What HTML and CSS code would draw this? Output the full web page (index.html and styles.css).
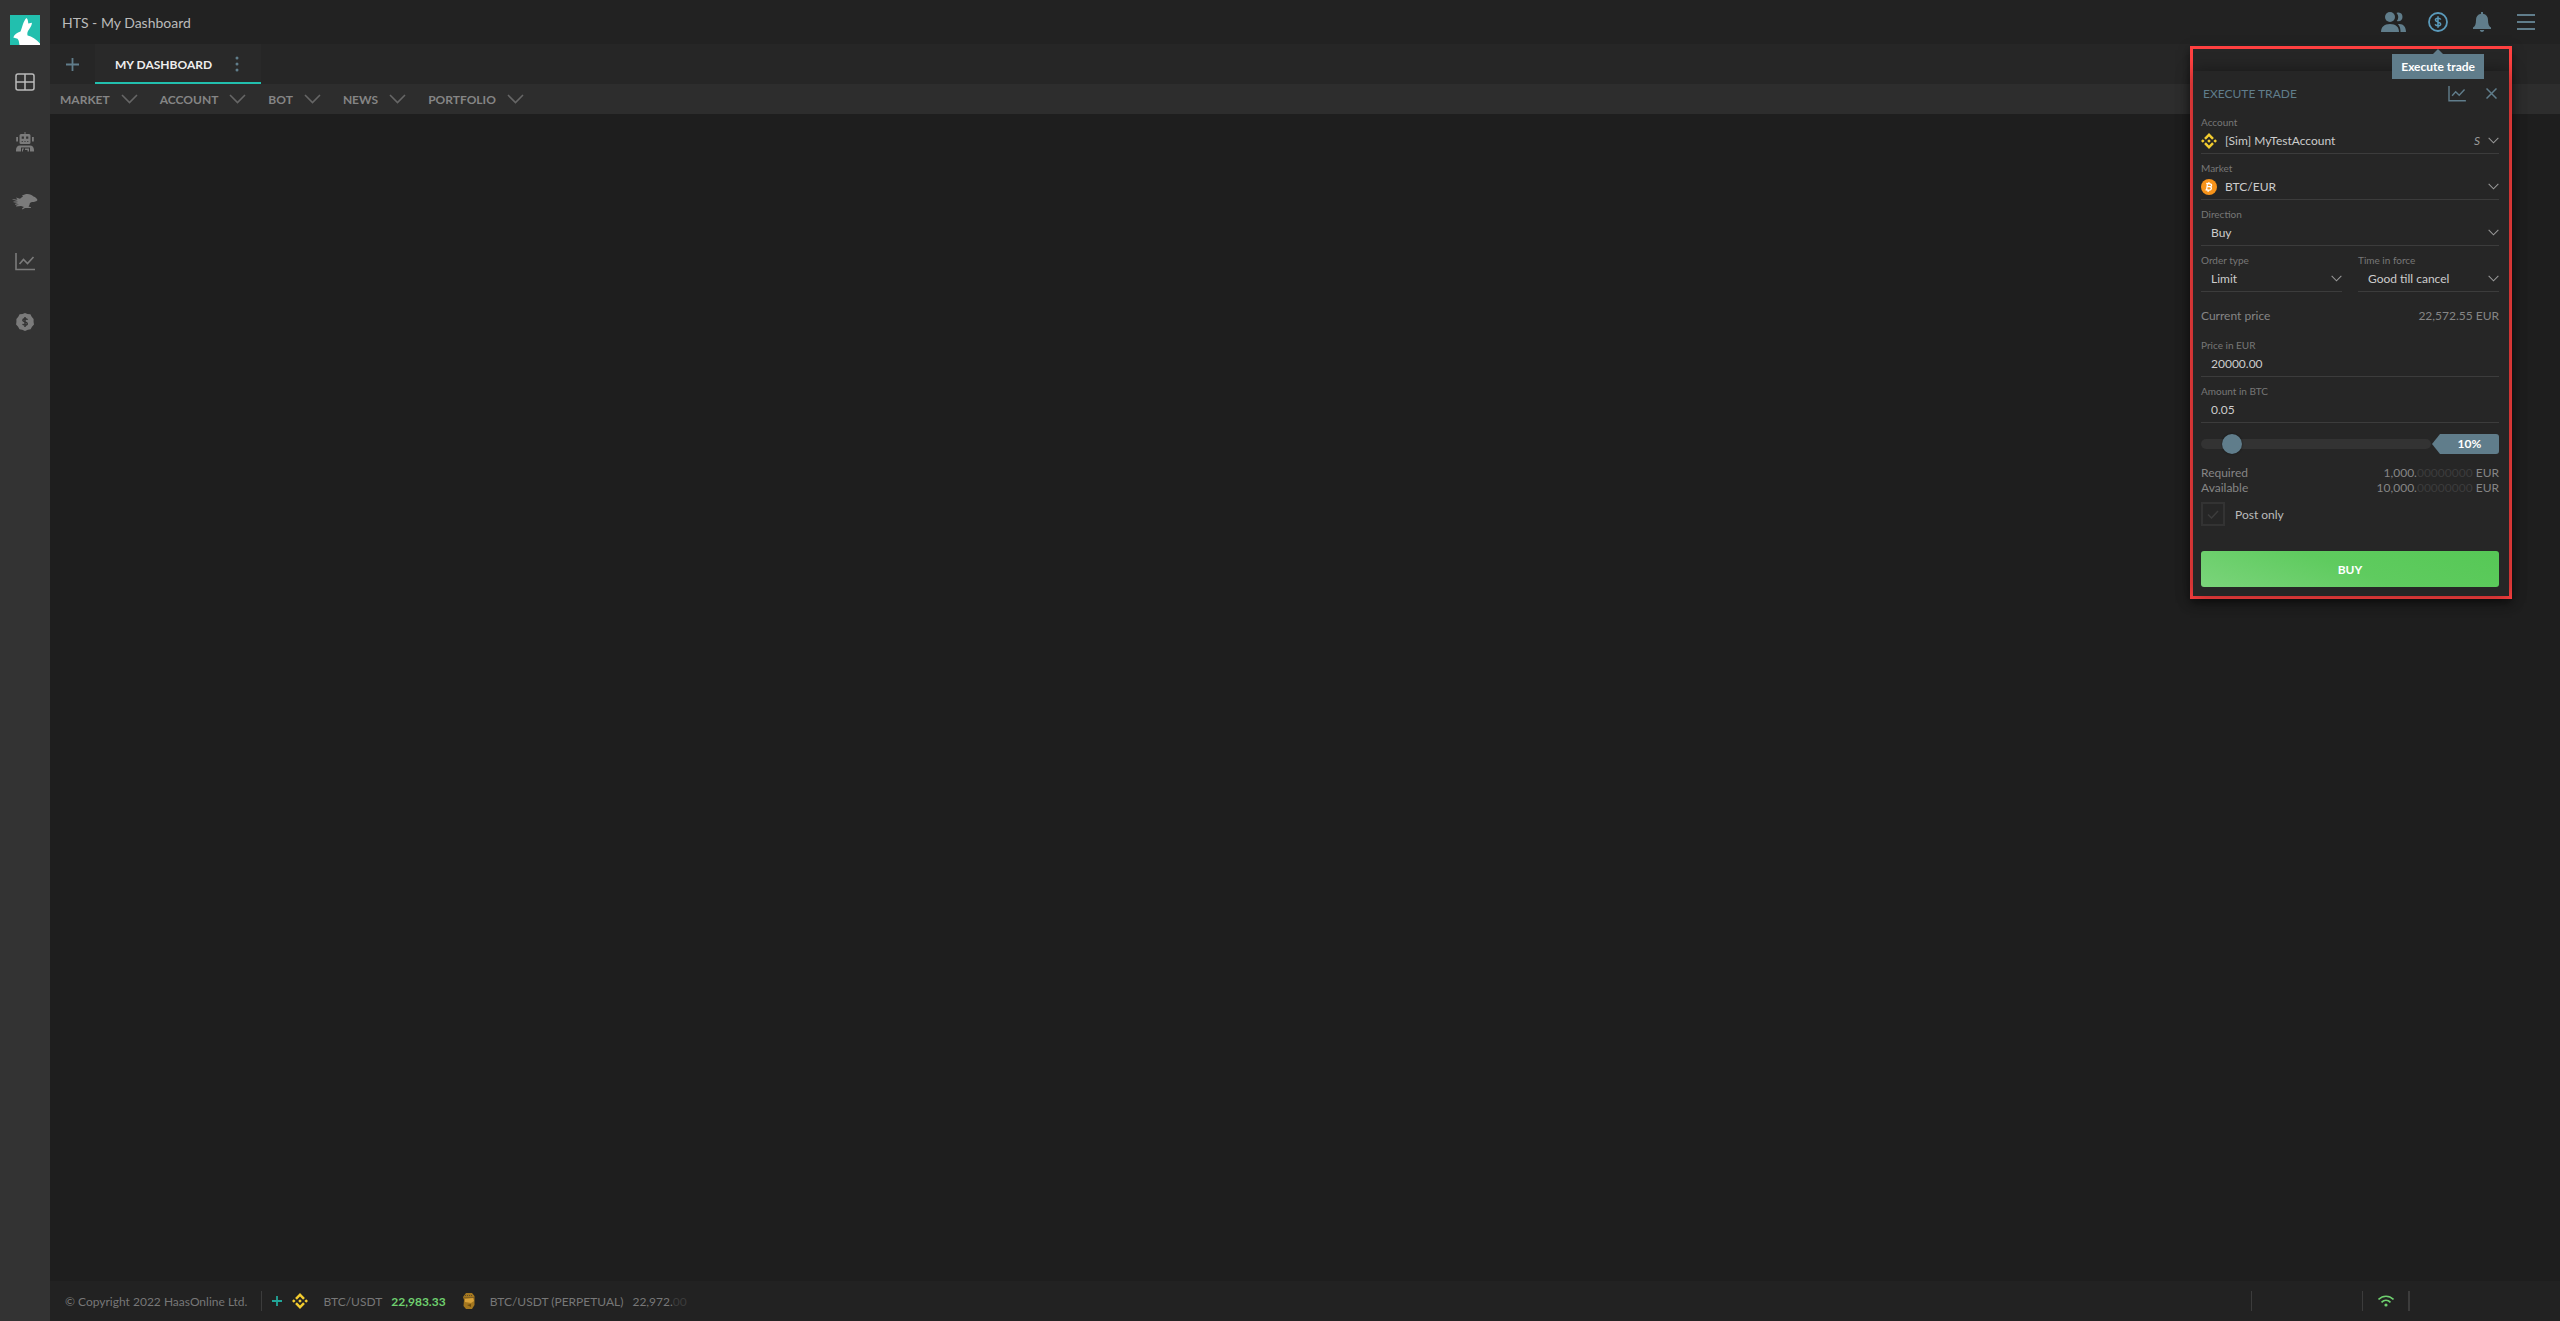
FILE: index.html
```html
<!DOCTYPE html>
<html lang="en">
<head>
    <meta charset="UTF-8">
    <title>HTS - My Dashboard</title>
    <meta name="viewport" content="width=device-width, initial-scale=1.0">
    <link rel="stylesheet" href="styles.css">
</head>
<body>
    <!-- shared icons -->
    <svg class="defs" width="0" height="0">
        <symbol id="chevron" viewBox="0 0 17 10"><path d="M1 1l7.500 7.500L16 1" fill="none" stroke="currentColor" stroke-width="1.600"/></symbol>
        <symbol id="chart" viewBox="0 0 20 18"><path d="M1 0v16.500H20" fill="none" stroke="currentColor" stroke-width="1.600"/><path d="M4.500 11L8.500 6.500l4 4L18.500 4" fill="none" stroke="currentColor" stroke-width="1.600"/></symbol>
        <symbol id="binance" viewBox="0 0 16 16"><path fill="#f3cc2f" d="M8 0l4.900 4.900-1.800 1.800L8 3.600 4.900 6.700 3.100 4.900zM1.800 6.200L3.600 8 1.800 9.800 0 8zM14.200 6.200L16 8l-1.800 1.800L12.400 8zM8 6.200L9.800 8 8 9.800 6.200 8zM4.900 9.300L8 12.400l3.100-3.100 1.800 1.800L8 16l-4.900-4.900z"/></symbol>
    </svg>

    <aside class="sidebar">
        <a class="logo" href="#" aria-label="Home">
            <svg width="30" height="30" viewBox="0 0 30 30"><rect width="30" height="30" fill="#22bfae"/><path fill="#fff" d="M16.300 3c1.500.8 1.700 3 2 5.500L22 7.800c-.2 3-2.200 5.700-4 8.200-.8 1.600-.8 3-.4 4.500 4.400 1.200 8.400 3.300 12.400 8V30H9.500c-.6-2.200-.2-4-2-6.200L3.300 22.500C4.500 19.500 7 17.500 10.500 16.600 12.500 12 12.900 7 16.300 3z"/></svg>
        </a>
        <nav class="side-nav">
            <a class="active" href="#" aria-label="Dashboards"><svg width="20" height="18" viewBox="0 0 20 18" fill="none" stroke="currentColor" stroke-width="1.500"><rect x="1" y="1" width="18" height="16" rx="2"/><path d="M10 1v16M1 9h18"/></svg></a>
            <a href="#" aria-label="Bots"><svg width="20" height="20" viewBox="0 0 20 20" fill="currentColor"><path fill-rule="evenodd" d="M9.500 0h1v2H14a1.500 1.500 0 0 1 1.500 1.500v7A1.500 1.500 0 0 1 14 12H6a1.500 1.500 0 0 1-1.500-1.500v-7A1.500 1.500 0 0 1 6 2h3.500zM6.700 4.500v2.200h2.200V4.500zM11.100 4.500v2.200h2.200V4.500zM6.700 9v1h1V9zM9.500 9v1h1V9zM12.300 9v1h1V9zM1.200 5h1.800v4.500H1.200zM17 5h1.800v4.500H17zM5 13.500h10c2.500 0 4 2 4 4.500v1.500H15V15.500H6v4H1V18c0-2.500 1.500-4.500 4-4.500zM7 16.500h2v1H8v2H7zM10 16.500h4v3h-1.500v-1.500H10z"/></svg></a>
            <a href="#" aria-label="Labs"><svg width="26" height="18" viewBox="0 0 26 18" fill="currentColor"><path d="M11 3.500l-1-1C14 0 19 .5 21.500 3.500c2 .5 3.500 2 4 3.500-.8 1.500-3 2-5.500 2-2 .3-2.500 1.500-2.500 3l-1 1.500 2.500.7V15h-6l-2.500 1.500-.5-1 2-1.500L9 13l-5 .5.3-1L7 11.500l-4 .2.300-1L6 10 1.500 9.300V8.500L6 8.300.5 6.500V6l5 .7L4 4.500l4 1.300c1-1.200 2-1.800 3-2.300z"/></svg></a>
            <a href="#" aria-label="Charts"><svg width="20" height="18"><use href="#chart"/></svg></a>
            <a href="#" aria-label="Trading"><svg width="18" height="18" viewBox="0 0 18 18"><path fill="currentColor" d="M9 0l2.500 1 2.900.2 1.300 2.600L17.600 6v3L18 11.500l-2 2.200-1.400 2.500-2.700.6L9 18l-2.800-1.200-2.700-.6-1.400-2.500-2-2.200L.4 9V6l1.900-2.200 1.300-2.600L6.500 1z"/><path d="M11.500 6.800C11 5.500 7 5.200 6.800 7.200c0 2 4.500 1.400 4.500 3.500 0 2-4.200 1.700-4.600.2M9 4v10" fill="none" stroke="#333" stroke-width="1.500"/></svg></a>
        </nav>
    </aside>

    <div class="page">
        <header class="topbar">
            <span class="page-title">HTS - My Dashboard</span>
            <div class="top-icons">
                <button aria-label="Community"><svg width="26" height="20" viewBox="0 0 26 20" fill="currentColor"><circle cx="9" cy="5" r="5"/><path d="M0 20c0-5 3-8 9-8s9 3 9 8zM15.500 1c4-1.500 6 1.200 6 4s-2.500 5.200-5.700 4c2-2.500 1.900-5.500-.3-8zM17 12.200c5-.8 8 2.500 8 7.800h-5.500c0-3-.5-5.600-2.500-7.800z"/></svg></button>
                <button class="current" aria-label="Execute trade"><svg width="20" height="20" viewBox="0 0 20 20" fill="none" stroke="currentColor"><circle cx="10" cy="10" r="9" stroke-width="1.800"/><path d="M12.700 7.600C12.200 5.800 7.500 5.500 7.400 8c0 2.400 5.300 1.500 5.300 4.100 0 2.400-5 2.100-5.500.2M10 4.300v11.400" stroke-width="1.500"/></svg></button>
                <button aria-label="Notifications"><svg width="20" height="20" viewBox="0 0 20 20" fill="currentColor"><path d="M9 0h2v1.800c3.500.6 5 3 5 6.200 0 4 1 6.500 3 7.500V17H1v-1.500c2-1 3-3.500 3-7.500 0-3.200 1.500-5.600 5-6.200zM7.800 18h4.400c-.3 2.600-4.100 2.600-4.400 0z"/></svg></button>
                <button aria-label="Menu"><svg width="18" height="16" viewBox="0 0 18 16" fill="none" stroke="currentColor" stroke-width="1.800"><path d="M0 1h18M0 8h18M0 15h18"/></svg></button>
            </div>
        </header>

        <div class="tabs">
            <button class="add-tab" aria-label="Add dashboard"><svg width="13" height="13" viewBox="0 0 13 13" stroke="currentColor" stroke-width="1.800"><path d="M6.500 0v13M0 6.500h13"/></svg></button>
            <div class="tab">
                <a href="#">MY DASHBOARD</a>
                <button aria-label="Dashboard options"><svg width="4" height="16" viewBox="0 0 4 16" fill="currentColor"><circle cx="2" cy="2" r="1.500"/><circle cx="2" cy="8" r="1.500"/><circle cx="2" cy="14" r="1.500"/></svg></button>
            </div>
        </div>

        <nav class="widgets">
            <button>MARKET <svg width="17" height="10"><use href="#chevron"/></svg></button>
            <button>ACCOUNT <svg width="17" height="10"><use href="#chevron"/></svg></button>
            <button>BOT <svg width="17" height="10"><use href="#chevron"/></svg></button>
            <button>NEWS <svg width="17" height="10"><use href="#chevron"/></svg></button>
            <button>PORTFOLIO <svg width="17" height="10"><use href="#chevron"/></svg></button>
        </nav>

        <main class="board"></main>

        <footer class="footer">
            <span class="copyright">© Copyright 2022 HaasOnline Ltd.</span>
            <div class="ticker">
                <button aria-label="Add ticker"><svg width="10" height="10" viewBox="0 0 10 10" stroke="currentColor" stroke-width="1.800"><path d="M5 0v10M0 5h10"/></svg></button>
                <svg class="coin" width="16" height="16"><use href="#binance"/></svg>
                <span class="pair">BTC/USDT</span>
                <span class="up">22,983.33</span>
                <svg class="coin" width="12" height="16" viewBox="0 0 12 16"><path fill="#a4771f" d="M3 0h6l2.500 3v9L9 16H3L.5 13 1 7 0 4z"/><path fill="#d9a239" d="M2 6l8-1 1 3-3 2-6-1z"/><path d="M2 2.500h8M1.500 4.500h9" stroke="#604d28" stroke-dasharray="1 1"/><path d="M4 12l4-1v3z" fill="#6d4b0d"/></svg>
                <span class="pair">BTC/USDT (PERPETUAL)</span>
                <span>22,972.<span class="dim">00</span></span>
            </div>
            <div class="status">
                <span class="slot"></span>
                <span class="wifi"><svg width="16" height="12" viewBox="0 0 16 12" fill="none" stroke="currentColor" stroke-width="1.600"><path d="M.5 4.500c4.500-4.400 10.500-4.400 15 0M3.500 7.300c2.700-2.600 6.300-2.600 9 0"/><circle cx="8" cy="10" r="1.600" fill="currentColor" stroke="none"/></svg></span>
            </div>
        </footer>
    </div>

    <div class="frame">
        <form class="trade">
            <div class="trade-head">
                <h2>EXECUTE TRADE</h2>
                <button type="button" aria-label="Open chart"><svg width="18" height="16"><use href="#chart"/></svg></button>
                <button type="button" aria-label="Close"><svg width="11" height="11" viewBox="0 0 11 11" stroke="currentColor" stroke-width="1.500"><path d="M.5.5l10 10M10.500.5l-10 10"/></svg></button>
            </div>

            <div class="field">
                <label for="account">Account</label>
                <div class="control">
                    <svg width="16" height="16"><use href="#binance"/></svg>
                    <select class="with-icon" id="account"><option>[Sim] MyTestAccount</option></select>
                    <em>S</em>
                    <svg class="arrow" width="11" height="7"><use href="#chevron"/></svg>
                </div>
            </div>
            <div class="field">
                <label for="market">Market</label>
                <div class="control">
                    <svg width="16" height="16" viewBox="0 0 16 16"><circle cx="8" cy="8" r="8" fill="#f7931a"/><path d="M6.600 4.200L5.500 11.500M5.200 4.500l3.800.4c2.400.4 1.800 3-.4 2.800l-2.200-.2 2.300.2c2.600.4 2 3.700-.7 3.500l-3.500-.3M8 3.200l-.2 1.500M7.200 11.300L7 12.800" fill="none" stroke="#fff" stroke-width="1.300"/></svg>
                    <select class="with-icon" id="market"><option>BTC/EUR</option></select>
                    <svg class="arrow" width="11" height="7"><use href="#chevron"/></svg>
                </div>
            </div>
            <div class="field">
                <label for="direction">Direction</label>
                <div class="control">
                    <select id="direction"><option>Buy</option><option>Sell</option></select>
                    <svg class="arrow" width="11" height="7"><use href="#chevron"/></svg>
                </div>
            </div>
            <div class="field-row">
                <div class="field">
                    <label for="order-type">Order type</label>
                    <div class="control">
                        <select id="order-type"><option>Limit</option><option>Market</option></select>
                        <svg class="arrow" width="11" height="7"><use href="#chevron"/></svg>
                    </div>
                </div>
                <div class="field">
                    <label for="tif">Time in force</label>
                    <div class="control">
                        <select id="tif"><option>Good till cancel</option></select>
                        <svg class="arrow" width="11" height="7"><use href="#chevron"/></svg>
                    </div>
                </div>
            </div>

            <div class="line current-price"><span>Current price</span><span>22,572.55 EUR</span></div>

            <div class="field">
                <label for="price">Price in EUR</label>
                <div class="control"><input type="text" id="price" value="20000.00"></div>
            </div>
            <div class="field">
                <label for="amount">Amount in BTC</label>
                <div class="control"><input type="text" id="amount" value="0.05"></div>
            </div>

            <div class="slider">
                <input type="range" id="percent" min="0" max="100" value="10" aria-label="Percentage of balance">
                <output for="percent">10%</output>
            </div>

            <div class="line"><span>Required</span><span>1,000.<span class="dim">00000000</span> EUR</span></div>
            <div class="line"><span>Available</span><span>10,000.<span class="dim">00000000</span> EUR</span></div>

            <label class="check">
                <input type="checkbox">
                <svg width="12" height="9" viewBox="0 0 12 9" fill="none" stroke="currentColor" stroke-width="1.500"><path d="M1 4.500L4.500 8 11 1"/></svg>
                Post only
            </label>

            <button class="buy" type="button">BUY</button>
        </form>
    </div>
    <div class="tooltip">Execute trade</div>
</body>
</html>
```

FILE: styles.css
```css
* {
    box-sizing: border-box;
}
body {
    margin: 0;
    min-height: 100vh;
    display: flex;
    position: relative;
    background: #1e1e1e;
    color: #858585;
    font-family: Lato, "Liberation Sans", sans-serif;
    font-size: 12px;
    line-height: 15px;
}
svg {
    display: block;
    flex: none;
}
a {
    color: inherit;
    text-decoration: none;
}
button, input, select {
    margin: 0;
    padding: 0;
    border: none;
    background: none;
    color: inherit;
    font: inherit;
}
.defs {
    position: absolute;
}
.dim {
    color: #3c3c3c;
}

/* sidebar */
.sidebar {
    width: 50px;
    flex: none;
    background: #333;
}
.logo {
    display: block;
    padding: 15px 10px 7px;
}
.side-nav a {
    display: flex;
    height: 60px;
    align-items: center;
    justify-content: center;
    color: #7b7b7b;
}
.side-nav a.active {
    color: #bbb;
}

.page {
    flex: 1;
    min-width: 0;
    display: flex;
    flex-direction: column;
}

/* top bar */
.topbar {
    display: flex;
    height: 44px;
    align-items: center;
    justify-content: space-between;
    padding: 0 12px;
    background: #222;
}
.page-title {
    padding-top: 2px;
    font-size: 14px;
    line-height: 18px;
    color: #bbb;
}
.top-icons {
    display: flex;
    color: #607d8b;
}
.top-icons button {
    display: flex;
    width: 44px;
    height: 44px;
    align-items: center;
    justify-content: center;
}
.top-icons .current {
    color: #5a9abb;
}

/* dashboard tabs */
.tabs {
    display: flex;
    height: 40px;
    background: #262626;
    color: #607d8b;
}
.add-tab {
    display: flex;
    width: 45px;
    align-items: center;
    justify-content: center;
}
.tab {
    display: flex;
    align-items: center;
    gap: 23px;
    padding: 2px 22px 0 20px;
    background: #292929;
    border-bottom: 2px solid #22bfae;
}
.tab a {
    color: #eee;
    font-weight: bold;
}

.widgets {
    display: flex;
    height: 30px;
    gap: 22px;
    padding: 0 10px;
    background: #2d2d2d;
}
.widgets button {
    display: flex;
    align-items: center;
    gap: 11px;
    font-weight: bold;
}
.widgets svg {
    color: #666;
}

.board {
    flex: 1;
}

/* footer */
.footer {
    display: flex;
    height: 40px;
    align-items: center;
    padding: 0 150px 0 15px;
    background: #222;
    color: #777;
}
.copyright {
    padding-right: 14px;
}
.ticker {
    display: flex;
    flex: 1;
    height: 20px;
    align-items: center;
    padding-left: 10px;
    border-left: 1px solid #3c3c3c;
}
.ticker button {
    color: #22a699;
}
.ticker .coin {
    margin: 0 15px 0 10px;
}
.ticker .up {
    margin-right: 7px;
    color: #6fd06f;
    font-weight: bold;
}
.ticker .pair {
    margin-right: 9px;
}
.status {
    display: flex;
    height: 20px;
}
.slot {
    width: 111px;
    border-left: 1px solid #3c3c3c;
}
.wifi {
    display: flex;
    width: 48px;
    align-items: center;
    justify-content: center;
    border-left: 1px solid #3c3c3c;
    border-right: 2px solid #3c3c3c;
    color: #6fd06f;
}

/* trade popup */
.frame {
    position: absolute;
    top: 46px;
    right: 48px;
    width: 322px;
    padding-top: 22px;
    border: 3px solid #ff4040;
    box-shadow: 0 4px 10px rgba(0, 0, 0, .5);
}
.trade {
    padding: 0 10px 9px 8px;
    background: #262626;
    box-shadow: 0 0 16px rgba(0, 0, 0, .4);
}
.trade-head {
    display: flex;
    height: 45px;
    align-items: center;
    gap: 20px;
    padding: 0 2px;
    color: #607d8b;
}
.trade-head h2 {
    flex: 1;
    margin: 0;
    font-size: 12px;
    line-height: 15px;
    font-weight: normal;
}
.field {
    flex: 1;
    margin-bottom: 8px;
}
.field label {
    display: block;
    font-size: 10px;
    line-height: 12px;
    color: #777;
}
.field-row {
    display: flex;
    gap: 16px;
}
.control {
    position: relative;
    display: flex;
    height: 26px;
    align-items: center;
    border-bottom: 1px solid #3c3c3c;
}
.control select, .control input {
    flex: 1;
    width: 100%;
    height: 25px;
    padding-left: 10px;
    appearance: none;
    outline: none;
    color: #ccc;
}
.control .with-icon {
    padding-left: 8px;
}
.control em {
    position: absolute;
    right: 19px;
    color: #999;
}
.control .arrow {
    position: absolute;
    right: 0;
    color: #999;
    pointer-events: none;
}
.line {
    display: flex;
    justify-content: space-between;
}
.current-price {
    height: 30px;
    margin-bottom: 9px;
    align-items: center;
}

.slider {
    display: flex;
    align-items: center;
    gap: 1px;
    margin: 11px 0;
}
.slider input {
    flex: 1;
    min-width: 0;
    height: 20px;
    appearance: none;
}
.slider input::-webkit-slider-runnable-track {
    height: 10px;
    border-radius: 5px;
    background: #333;
}
.slider input::-webkit-slider-thumb {
    width: 20px;
    height: 20px;
    margin-top: -5px;
    appearance: none;
    border-radius: 50%;
    background: #607d8b;
    box-shadow: 0 0 2px rgba(0, 0, 0, .6);
}
.slider output {
    width: 67px;
    padding-left: 8px;
    border-radius: 3px;
    background: #607d8b;
    clip-path: polygon(0 50%, 8px 0, 100% 0, 100% 100%, 8px 100%);
    color: #fff;
    font-weight: bold;
    line-height: 20px;
    text-align: center;
}

.check {
    display: flex;
    position: relative;
    align-items: center;
    gap: 10px;
    margin: 7px 0 25px;
    color: #bbb;
}
.check input {
    width: 24px;
    height: 24px;
    appearance: none;
    border: 2px solid #333;
}
.check svg {
    position: absolute;
    left: 6px;
    color: #3c3c3c;
}
.buy {
    display: block;
    width: 100%;
    height: 36px;
    border-radius: 3px;
    background: linear-gradient(20deg, #7bd47b, #5fcb5f 50%, #56c856);
    color: #fff;
    font-weight: bold;
}

.tooltip {
    position: absolute;
    top: 54px;
    right: 76px;
    padding: 5px 9px;
    background: #607d8b;
    color: #fff;
    font-weight: bold;
}
.tooltip::before {
    content: "";
    position: absolute;
    top: -5px;
    left: 50%;
    margin-left: -5px;
    border: 5px solid transparent;
    border-top: none;
    border-bottom-color: #607d8b;
}
```
